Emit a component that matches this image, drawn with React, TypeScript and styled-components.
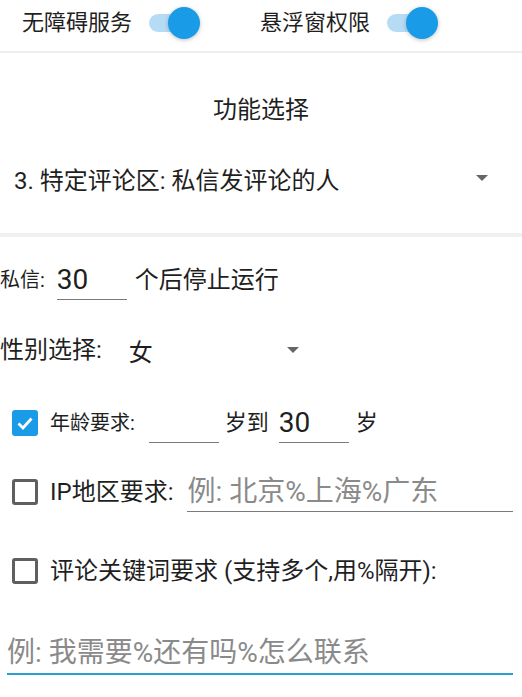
import React from "react";
import styled, { createGlobalStyle } from "styled-components";

const GlobalStyle = createGlobalStyle`
  html, body {
    margin: 0;
    padding: 0;
    background: #ffffff;
  }
  body {
    font-family: Roboto, "Noto Sans CJK SC", "Noto Sans", sans-serif;
    color: #1f1f1f;
  }
`;

const Page = styled.div`
  width: 522px;
  height: 697px;
  overflow: hidden;
  background: #fff;
`;

const TopBar = styled.div`
  height: 46px;
  display: flex;
  align-items: center;
  padding-left: 22px;
  margin-bottom: 5px;
`;

const SwitchGroup = styled.div<{ $width: number }>`
  display: flex;
  align-items: center;
  width: ${(p) => p.$width}px;
  font-size: 22px;
  line-height: 1;
`;

const SwitchTrack = styled.div`
  position: relative;
  width: 46px;
  height: 18px;
  border-radius: 9px;
  background: #b6dcf5;
  margin-left: 17px;
`;

const SwitchThumb = styled.div`
  position: absolute;
  right: -5px;
  top: -7px;
  width: 32px;
  height: 32px;
  border-radius: 50%;
  background: #1a9be8;
  box-shadow: 0 1px 4px rgba(0, 0, 0, 0.25);
`;

const Divider = styled.div<{ $size: number; $color: string }>`
  height: ${(p) => p.$size}px;
  background: ${(p) => p.$color};
`;

const Title = styled.div`
  margin-top: 42px;
  height: 30px;
  line-height: 30px;
  text-align: center;
  font-size: 24px;
`;

const Spinner = styled.div<{ $width?: number }>`
  display: flex;
  align-items: center;
  justify-content: space-between;
  height: 30px;
  font-size: 24px;
  ${(p) => (p.$width ? `width: ${p.$width}px;` : "")}
`;

const MainSpinner = styled(Spinner)`
  margin-top: 38px;
  margin-bottom: 40px;
  padding-left: 14px;
  padding-right: 34px;
`;

const Arrow = styled.span`
  width: 0;
  height: 0;
  border-left: 6px solid transparent;
  border-right: 6px solid transparent;
  border-top: 6px solid #666;
`;

const Form = styled.div`
  display: flex;
  flex-direction: column;
`;

const Row = styled.div<{ $mt: number; $pl?: number; $pr?: number }>`
  display: flex;
  align-items: center;
  height: 40px;
  margin-top: ${(p) => p.$mt}px;
  padding-left: ${(p) => p.$pl ?? 0}px;
  padding-right: ${(p) => p.$pr ?? 0}px;
`;

const Label = styled.span<{ $size: number; $ml?: number }>`
  font-size: ${(p) => p.$size}px;
  margin-left: ${(p) => p.$ml ?? 0}px;
  white-space: nowrap;
  line-height: 1;
`;

const Field = styled.div<{ $width?: number; $ml?: number; $grow?: boolean }>`
  height: 40px;
  box-sizing: border-box;
  border-bottom: 1.5px solid #7a7a7a;
  display: flex;
  align-items: center;
  font-size: 28px;
  line-height: 1;
  margin-left: ${(p) => p.$ml ?? 0}px;
  ${(p) => (p.$width ? `width: ${p.$width}px;` : "")}
  ${(p) => (p.$grow ? "flex: 1;" : "")}
`;

const Hint = styled.span`
  color: #8a8a8a;
  font-size: 28px;
  line-height: 1;
  white-space: nowrap;
`;

const Check = styled.div<{ $on?: boolean }>`
  width: 26px;
  height: 26px;
  box-sizing: border-box;
  border-radius: 3px;
  flex-shrink: 0;
  display: flex;
  align-items: center;
  justify-content: center;
  background: ${(p) => (p.$on ? "#1a9be8" : "transparent")};
  border: ${(p) => (p.$on ? "none" : "3px solid #5f5f5f")};
`;

const KeywordField = styled.div`
  margin: 41px 9px 0 7px;
  height: 43px;
  box-sizing: border-box;
  border-bottom: 2.5px solid #2a9fd6;
  display: flex;
  align-items: center;
`;

function Toggle({ label, width }: { label: string; width: number }) {
  return (
    <SwitchGroup $width={width}>
      {label}
      <SwitchTrack>
        <SwitchThumb />
      </SwitchTrack>
    </SwitchGroup>
  );
}

function CheckBox({ on }: { on?: boolean }) {
  return (
    <Check $on={on}>
      {on && (
        <svg width="20" height="20" viewBox="0 0 20 20">
          <path d="M3.5 10.5 L8 15 L16.5 5.5" fill="none" stroke="#fff" strokeWidth="2.8" />
        </svg>
      )}
    </Check>
  );
}

export default function App() {
  return (
    <Page>
      <GlobalStyle />
      <TopBar>
        <Toggle label="无障碍服务" width={238} />
        <Toggle label="悬浮窗权限" width={200} />
      </TopBar>
      <Divider $size={2} $color="#efefef" />
      <Title>功能选择</Title>
      <MainSpinner>
        <span>3. 特定评论区: 私信发评论的人</span>
        <Arrow />
      </MainSpinner>
      <Divider $size={4} $color="#f1f1f1" />

      <Form>
        <Row $mt={23}>
          <Label $size={20}>私信:</Label>
          <Field $width={70} $ml={12}>30</Field>
          <Label $size={24} $ml={8}>个后停止运行</Label>
        </Row>

        <Row $mt={30}>
          <Label $size={24}>性别选择:</Label>
          <Spinner $width={170} style={{ marginLeft: 27 }}>
            <span>女</span>
            <Arrow />
          </Spinner>
        </Row>

        <Row $mt={33} $pl={12}>
          <CheckBox on />
          <Label $size={20} $ml={12}>年龄要求:</Label>
          <Field $width={70} $ml={14} />
          <Label $size={22} $ml={6}>岁到</Label>
          <Field $width={70} $ml={10}>30</Field>
          <Label $size={22} $ml={7}>岁</Label>
        </Row>

        <Row $mt={29} $pl={12} $pr={9}>
          <CheckBox />
          <Label $size={24} $ml={12}>IP地区要求:</Label>
          <Field $grow $ml={14}>
            <Hint>例: 北京%上海%广东</Hint>
          </Field>
        </Row>

        <Row $mt={39} $pl={12}>
          <CheckBox />
          <Label $size={24} $ml={12}>评论关键词要求 (支持多个,用%隔开):</Label>
        </Row>

        <KeywordField>
          <Hint>例: 我需要%还有吗%怎么联系</Hint>
        </KeywordField>
      </Form>
    </Page>
  );
}
